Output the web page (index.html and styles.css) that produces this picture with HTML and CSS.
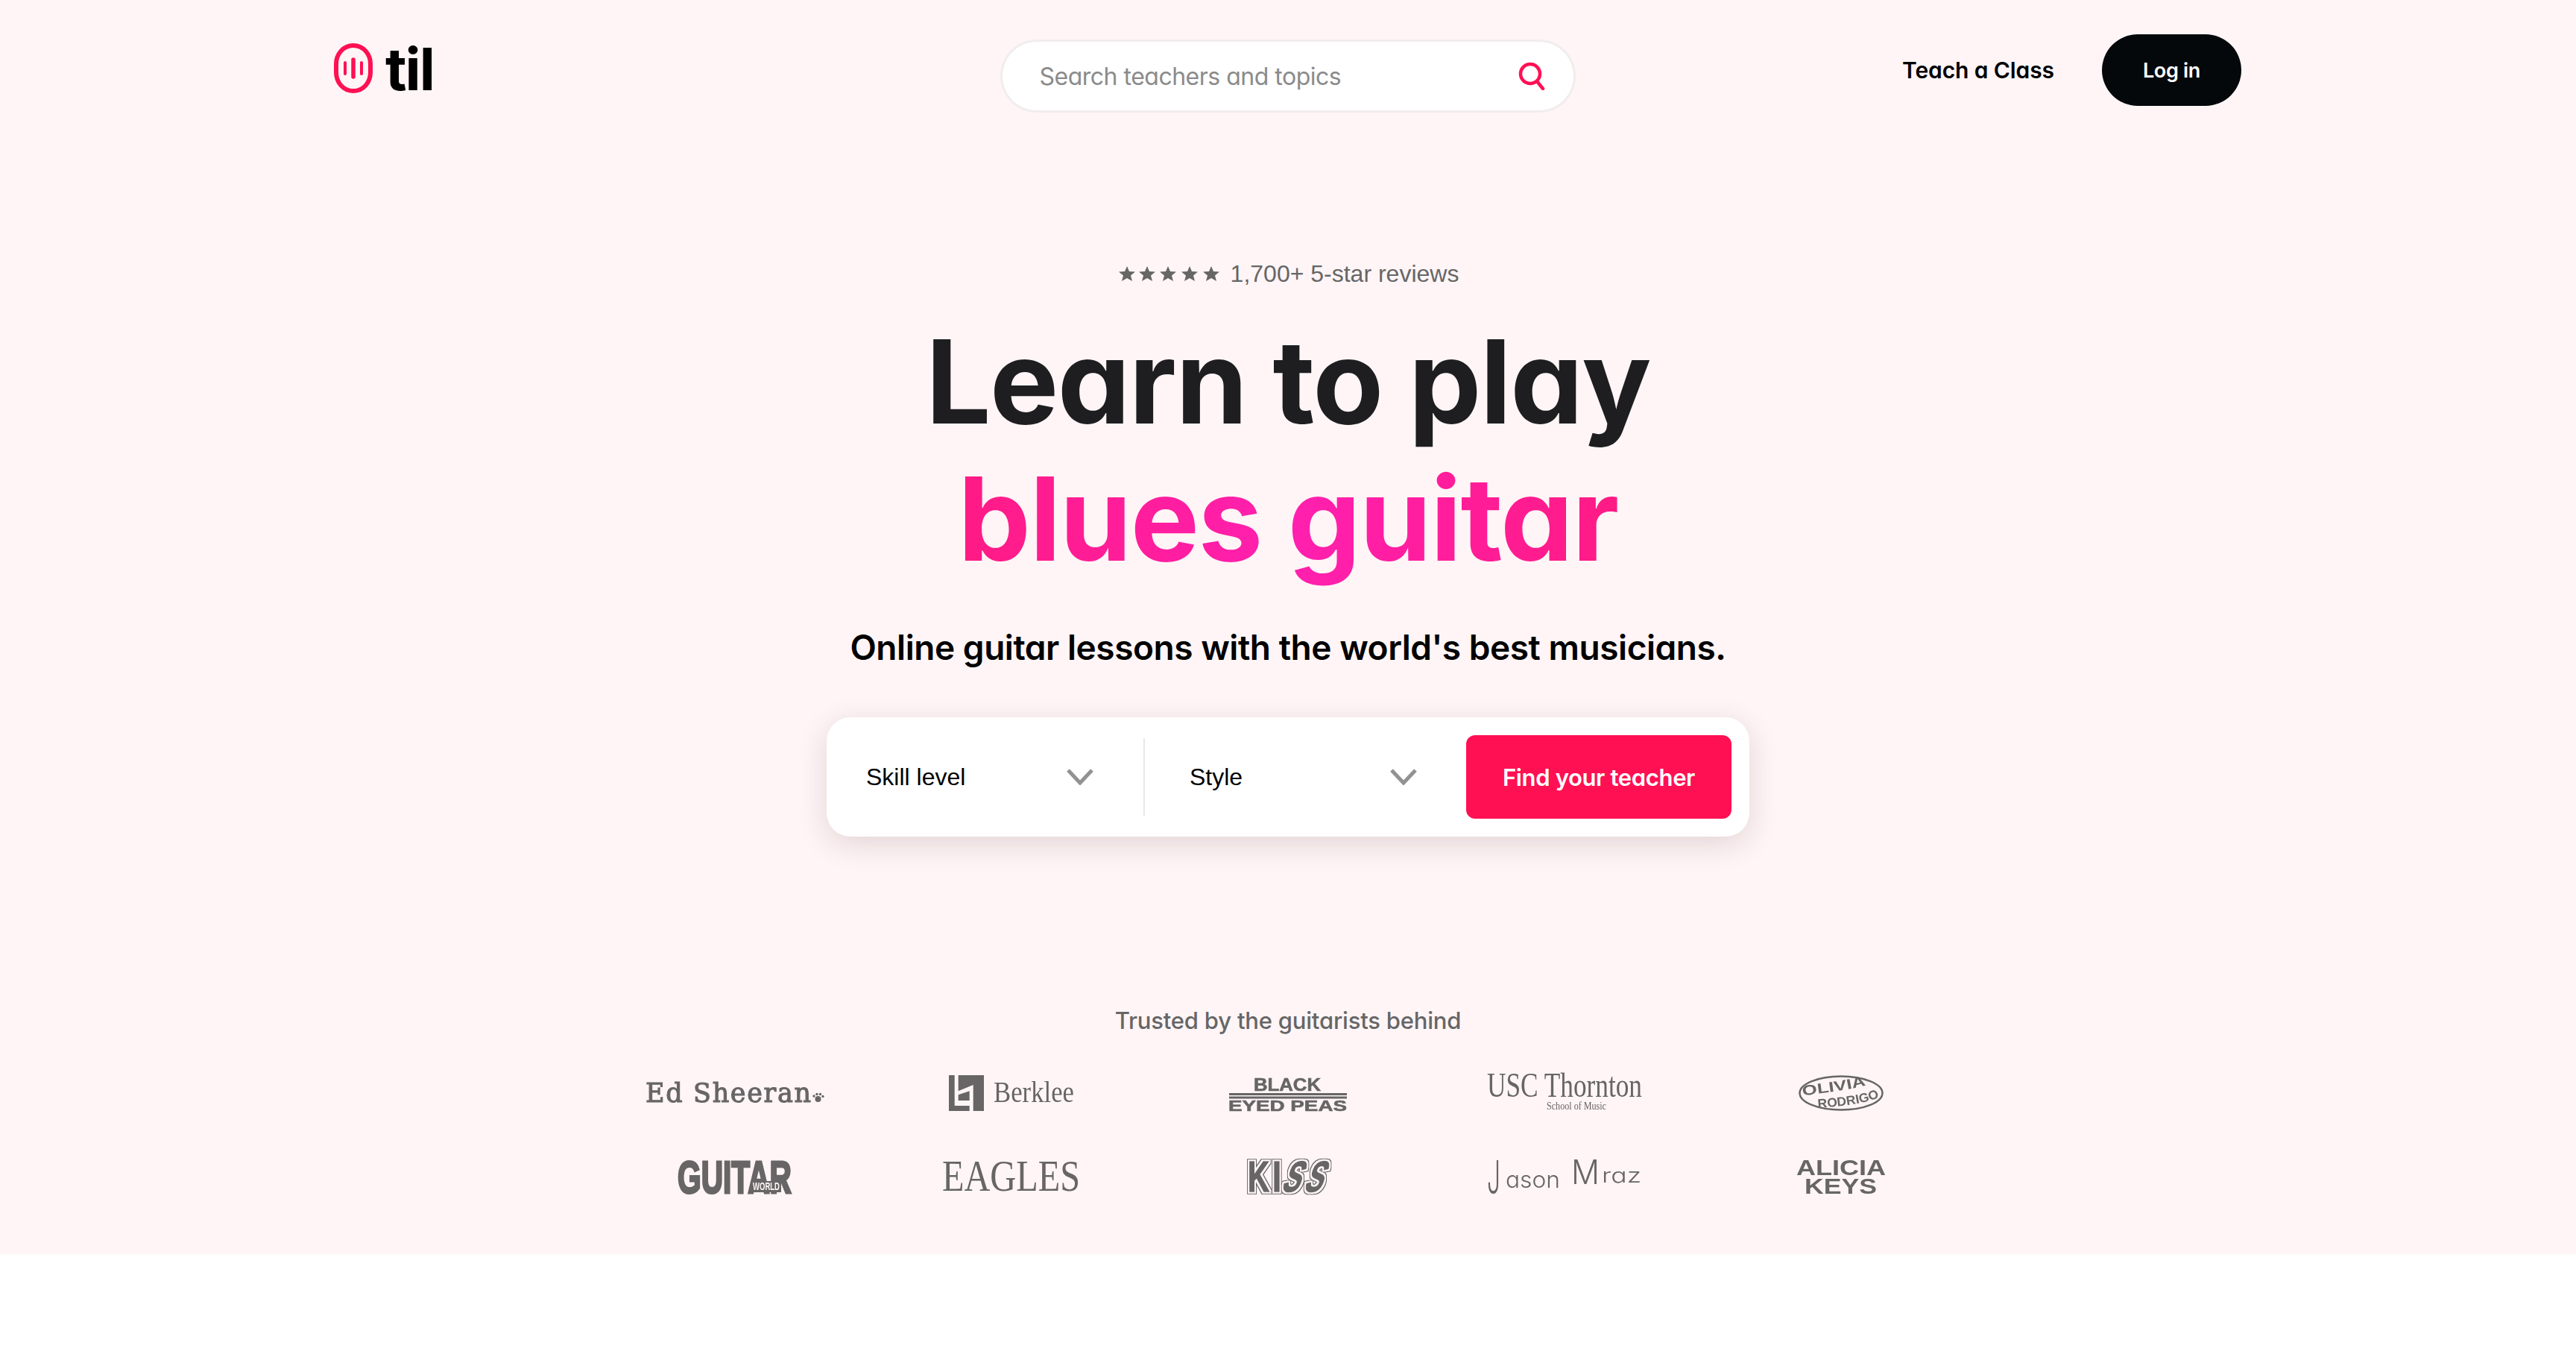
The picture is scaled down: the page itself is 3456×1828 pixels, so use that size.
FILE: index.html
```html
<!DOCTYPE html>
<html lang="en">
<head>
<meta charset="utf-8">
<title>til</title>
<link rel="stylesheet" href="styles.css">
</head>
<body>
<div class="hero">
  <header class="topbar">
    <a class="brand">
      <svg class="brand-mark" viewBox="0 0 52 67">
        <path class="mark-ring" d="M26 3C12 3 3 15 3 28V39C3 52 12 64 26 64S49 52 49 39V28C49 15 40 3 26 3Z"/>
        <path class="mark-bar" d="M15 26V41"/>
        <path class="mark-bar mark-bar-mid" d="M26 22V45"/>
        <path class="mark-bar" d="M37 26V41"/>
      </svg>
      <span class="brand-name">til</span>
    </a>
    <div class="search">
      <span class="search-text">Search teachers and topics</span>
      <svg class="search-icon" viewBox="0 0 36 38">
        <circle cx="16" cy="16" r="13"/>
        <path d="M25 26L33 36"/>
      </svg>
    </div>
    <nav class="nav">
      <a class="nav-link">Teach a Class</a>
      <a class="login">Log in</a>
    </nav>
  </header>

  <main class="main">
    <div class="reviews">
      <svg class="stars" viewBox="0 0 135 20">
        <polygon points="11,0 14,7 22,7.500 16,12.500 18,20 11,16 4,20 6,12.500 0,7.500 8,7"/>
        <polygon points="38,0 41,7 49,7.500 43,12.500 45,20 38,16 31,20 33,12.500 27,7.500 35,7"/>
        <polygon points="66,0 69,7 77,7.500 71,12.500 73,20 66,16 59,20 61,12.500 55,7.500 63,7"/>
        <polygon points="95,0 98,7 106,7.500 100,12.500 102,20 95,16 88,20 90,12.500 84,7.500 92,7"/>
        <polygon points="124,0 127,7 135,7.500 129,12.500 131,20 124,16 117,20 119,12.500 113,7.500 121,7"/>
      </svg>
      <span>1,700+ 5-star reviews</span>
    </div>
    <h1 class="headline">
      <span class="headline-line">Learn to play</span>
      <span class="headline-line headline-accent">blues guitar</span>
    </h1>
    <p class="subhead">Online guitar lessons with the world's best musicians.</p>

    <div class="finder">
      <div class="picker picker-first">
        <span>Skill level</span>
        <svg class="chevron" viewBox="0 0 36 22"><path d="M2 2L18 19L34 2"/></svg>
      </div>
      <div class="picker-divider"></div>
      <div class="picker picker-second">
        <span>Style</span>
        <svg class="chevron" viewBox="0 0 36 22"><path d="M2 2L18 19L34 2"/></svg>
      </div>
      <button class="find">Find your teacher</button>
    </div>

    <p class="trusted">Trusted by the guitarists behind</p>

    <div class="logos">
      <svg class="logo" width="240" height="48" viewBox="0 0 240 48">
        <text class="lg-type" x="0" y="36" font-size="35" textLength="222">Ed Sheeran</text>
        <circle cx="231.500" cy="32" r="4"/><circle cx="226" cy="28" r="1.700"/><circle cx="230" cy="25.500" r="1.700"/><circle cx="234.500" cy="25.500" r="1.700"/><circle cx="238" cy="28.500" r="1.700"/>
      </svg>
      <svg class="logo" width="168" height="48" viewBox="0 0 168 48">
        <path fill-rule="evenodd" d="M0 0H47V48H0ZM7.700 0V41H27.700V48H32.700V13L12.700 21.300V0ZM12.700 26.300L27.700 21.300V34H12.700Z"/>
        <text class="lg-serif" x="60" y="36" font-size="39" textLength="108" lengthAdjust="spacingAndGlyphs">Berklee</text>
      </svg>
      <svg class="logo" width="160" height="48" viewBox="0 0 160 48">
        <text class="lg-black" x="34" y="21" font-size="23" textLength="90" lengthAdjust="spacingAndGlyphs">BLACK</text>
        <rect x="1" y="24" width="158" height="3"/><rect x="1" y="28.500" width="158" height="3"/>
        <text class="lg-black" x="0" y="47.500" font-size="20.500" textLength="159" lengthAdjust="spacingAndGlyphs">EYED PEAS</text>
      </svg>
      <svg class="logo" width="208" height="48" viewBox="0 0 208 48">
        <text class="lg-serif" x="0" y="29" font-size="46" textLength="208" lengthAdjust="spacingAndGlyphs">USC Thornton</text>
        <text class="lg-serif" x="80" y="46" font-size="14" textLength="80" lengthAdjust="spacingAndGlyphs">School of Music</text>
      </svg>
      <svg class="logo" width="114" height="48" viewBox="0 0 114 48">
        <ellipse class="lg-ring" cx="57" cy="24" rx="55.500" ry="22.500"/>
        <path id="ol-top" class="lg-none" d="M6 28C24 24 60 22 92 13"/>
        <path id="ol-bot" class="lg-none" d="M26 44C50 42 84 40 110 29"/>
        <text class="lg-olivia" font-size="19"><textPath href="#ol-top" textLength="86" lengthAdjust="spacingAndGlyphs">OLIVIA</textPath></text>
        <text class="lg-olivia" font-size="17"><textPath href="#ol-bot" textLength="84" lengthAdjust="spacingAndGlyphs">RODRIGO</textPath></text>
      </svg>

      <svg class="logo" width="156" height="48" viewBox="0 0 156 48">
        <text class="lg-heavy" x="1" y="46" font-size="62" textLength="153" lengthAdjust="spacingAndGlyphs">GUITAR</text>
        <rect x="100" y="30" width="40" height="15"/>
        <text class="lg-world" x="102" y="42" font-size="14" textLength="36" lengthAdjust="spacingAndGlyphs">WORLD</text>
      </svg>
      <svg class="logo" width="186" height="48" viewBox="0 0 186 48">
        <text class="lg-serif" x="0" y="43" font-size="59" textLength="185" lengthAdjust="spacingAndGlyphs">EAGLES</text>
      </svg>
      <svg class="logo" width="114" height="48" viewBox="0 0 114 48">
        <defs>
          <filter id="kiss-edge" x="-10%" y="-10%" width="120%" height="120%">
            <feMorphology in="SourceAlpha" operator="dilate" radius="1.500" result="gap"/>
            <feFlood flood-color="#fff5f6"/>
            <feComposite in2="gap" operator="in" result="gapFill"/>
            <feMorphology in="SourceAlpha" operator="dilate" radius="2.500" result="edge"/>
            <feFlood flood-color="#676566"/>
            <feComposite in2="edge" operator="in" result="edgeFill"/>
            <feMerge><feMergeNode in="edgeFill"/><feMergeNode in="gapFill"/><feMergeNode in="SourceGraphic"/></feMerge>
          </filter>
        </defs>
        <g class="kiss-set">
          <text class="lg-kiss" x="3" y="44" font-size="58" textLength="29" lengthAdjust="spacingAndGlyphs">K</text>
          <text class="lg-kiss" x="36" y="44" font-size="58" textLength="12" lengthAdjust="spacingAndGlyphs">I</text>
          <text class="lg-kiss lg-bolt" x="55" y="44" font-size="58" textLength="24" lengthAdjust="spacingAndGlyphs">S</text>
          <text class="lg-kiss lg-bolt" x="85" y="44" font-size="58" textLength="24" lengthAdjust="spacingAndGlyphs">S</text>
        </g>
      </svg>
      <svg class="logo" width="208" height="48" viewBox="0 0 208 48">
        <text class="lg-sign" x="0" y="47" font-size="62" textLength="18" lengthAdjust="spacingAndGlyphs">J</text>
        <text class="lg-sign" x="25" y="39" font-size="31" textLength="73" lengthAdjust="spacingAndGlyphs">ason</text>
        <text class="lg-sign" x="113" y="34" font-size="45" textLength="38" lengthAdjust="spacingAndGlyphs">M</text>
        <text class="lg-sign" x="154" y="32" font-size="27" textLength="53" lengthAdjust="spacingAndGlyphs">raz</text>
      </svg>
      <svg class="logo" width="122" height="48" viewBox="0 0 122 48">
        <text class="lg-alicia" x="1" y="22" font-size="30" textLength="120" lengthAdjust="spacingAndGlyphs">ALICIA</text>
        <text class="lg-alicia" x="12" y="47" font-size="30" textLength="97" lengthAdjust="spacingAndGlyphs">KEYS</text>
      </svg>
    </div>
  </main>
</div>
</body>
</html>
```
FILE: styles.css
```css
* { box-sizing: border-box; }
html, body { margin: 0; padding: 0; background: #fff; }
body { font-family: "Liberation Sans", Arial, sans-serif; height: 1828px; overflow: hidden; }

.hero { background: #fff5f6; height: 1682px; }

.topbar {
  display: grid;
  grid-template-columns: 1fr 766px 1fr;
  align-items: start;
  padding: 46px 449px 0 448px;
  height: 151px;
}

.brand { display: flex; align-items: flex-start; gap: 17px; margin-top: 12px; }
.brand-mark { width: 52px; height: 67px; display: block; }
.mark-ring { fill: none; stroke: #ff1053; stroke-width: 6; }
.mark-bar { fill: none; stroke: #ff1053; stroke-width: 4; stroke-linecap: round; }
.mark-bar-mid { stroke-width: 5.500; }
.brand-name {
  font-family: Inter, "Liberation Sans", sans-serif;
  font-weight: 700;
  font-size: 78px;
  line-height: 70px;
  letter-spacing: -2px;
  color: #000;
}

.search {
  margin-top: 10px;
  height: 92px;
  background: #fff;
  border-radius: 46px;
  box-shadow: 0 0 0 3px #f1edef;
  display: flex;
  align-items: center;
  justify-content: space-between;
  padding: 0 38px 0 50px;
}
.search-text {
  font-family: Inter, "Liberation Sans", sans-serif;
  font-feature-settings: "cv11" 1;
  font-size: 32px;
  color: #8b8b8b;
  letter-spacing: -0.5px;
}
.search-icon { width: 36px; height: 38px; display: block; fill: none; stroke: #ff1053; stroke-width: 4.500; stroke-linecap: round; }

.nav { display: flex; justify-content: flex-end; align-items: center; gap: 64px; height: 96px; }
.nav-link, .login {
  font-family: Inter, "Liberation Sans", sans-serif;
  font-feature-settings: "cv11" 1;
  font-weight: 600;
  font-size: 30px;
  letter-spacing: -0.1px;
  color: #000;
}
.login {
  width: 187px;
  height: 96px;
  border-radius: 48px;
  background: #04080b;
  color: #fff;
  display: flex;
  align-items: center;
  justify-content: center;
  font-size: 27px;
  letter-spacing: -0.3px;
}

.main { display: flex; flex-direction: column; align-items: center; }

.reviews {
  margin-top: 196px;
  padding-left: 2px;
  display: flex;
  align-items: center;
  gap: 15px;
  height: 40px;
  font-size: 32px;
  color: #666;
}
.stars { width: 135px; height: 20px; display: block; fill: #666; }

.headline {
  margin: 33px 0 0;
  font-family: Inter, "Liberation Sans", sans-serif;
  font-feature-settings: "cv11" 1;
  font-weight: 650;
  font-size: 155px;
  line-height: 184px;
  letter-spacing: -1.6px;
  color: #1e1e20;
  text-align: center;
}
.headline-line { display: block; }
.headline-accent {
  background: linear-gradient(90deg, #ff1a80 0%, #ff20b0 50%, #ff1a80 100%);
  -webkit-background-clip: text;
  background-clip: text;
  color: transparent;
}

.subhead {
  margin: 50px 0 0;
  font-family: Inter, "Liberation Sans", sans-serif;
  font-feature-settings: "cv11" 1;
  font-weight: 600;
  font-size: 46px;
  line-height: 60px;
  letter-spacing: -0.45px;
  color: #000;
}

.finder {
  margin-top: 64px;
  width: 1238px;
  height: 160px;
  background: #fff;
  border-radius: 32px;
  box-shadow: 0 10px 40px rgba(60, 20, 30, 0.14);
  display: flex;
  align-items: center;
  padding: 0 24px 0 53px;
}
.picker {
  display: flex;
  align-items: center;
  justify-content: space-between;
  flex: none;
  width: 305px;
  font-size: 32px;
  color: #000;
}
.picker-first { margin-right: 67px; }
.picker-second { margin-left: 60px; margin-right: 66px; }
.picker-divider { flex: none; width: 2px; height: 104px; background: #e9e7e8; }
.chevron { width: 36px; height: 22px; display: block; fill: none; stroke: #929292; stroke-width: 5; }

.find {
  flex: none;
  border: 0;
  width: 356px;
  height: 112px;
  border-radius: 12px;
  background: #ff1053;
  color: #fff;
  font-family: Inter, "Liberation Sans", sans-serif;
  font-feature-settings: "cv11" 1;
  font-weight: 600;
  font-size: 31px;
  letter-spacing: -0.35px;
  padding: 0;
}

.trusted {
  margin: 227px 0 0;
  font-family: Inter, "Liberation Sans", sans-serif;
  font-feature-settings: "cv11" 1;
  font-weight: 500;
  font-size: 31px;
  line-height: 40px;
  letter-spacing: -0.2px;
  color: #666;
}

.logos {
  margin-top: 53px;
  display: grid;
  grid-template-columns: repeat(5, 371px);
  row-gap: 64px;
  justify-items: center;
  align-items: center;
}
.logo { display: block; fill: #676566; overflow: visible; filter: blur(0.4px); }

.lg-type { font-family: "DejaVu Serif", serif; stroke: #676566; stroke-width: 1.1px; }
.lg-serif { font-family: "Liberation Serif", serif; }
.lg-black { font-family: "Liberation Sans", sans-serif; font-weight: 700; stroke: #676566; stroke-width: 0.6px; }
.lg-heavy { font-family: "Liberation Sans", sans-serif; font-weight: 700; stroke: #676566; stroke-width: 3; }
.lg-world { font-family: "Liberation Sans", sans-serif; font-weight: 700; fill: #fff5f6; }
.lg-kiss { font-family: "Liberation Sans", sans-serif; font-weight: 700; stroke: #676566; stroke-width: 1.500; }
.lg-bolt { transform-box: fill-box; transform-origin: center; transform: skewX(-22deg); }
.kiss-set { filter: url(#kiss-edge); }
.lg-sign { font-family: Inter, sans-serif; font-feature-settings: "cv11" 1; font-weight: 300; }
.lg-alicia { font-family: "Liberation Sans", sans-serif; font-weight: 700; }
.lg-olivia { font-family: "Liberation Sans", sans-serif; font-weight: 700; }
.lg-ring { fill: none; stroke: #676566; stroke-width: 2.500; }
.lg-none { fill: none; }
```
